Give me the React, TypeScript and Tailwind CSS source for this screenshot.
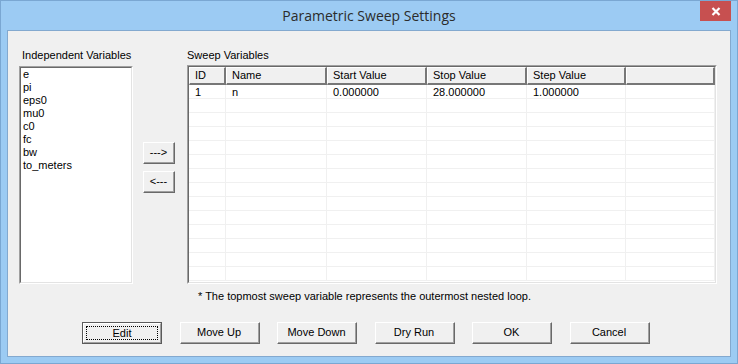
import React from 'react'

const INDEPENDENT = ['e', 'pi', 'eps0', 'mu0', 'c0', 'fc', 'bw', 'to_meters']

const COLUMNS = [
  { label: 'ID', w: 'w-[37px]' },
  { label: 'Name', w: 'w-[101px]' },
  { label: 'Start Value', w: 'w-[100px]' },
  { label: 'Stop Value', w: 'w-[100px]' },
  { label: 'Step Value', w: 'w-[99px]' },
  { label: '', w: 'flex-1' }
]

const ROWS = [['1', 'n', '0.000000', '28.000000', '1.000000', '']]

// classic raised 3D button
function WinButton({ label, w = 'w-[80px]', isDefault = false }: { label: string; w?: string; isDefault?: boolean }) {
  if (isDefault) {
    return (
      <div className={`${w} h-[22px] border border-[#5a5a5a]`}>
        <div className="h-full border-t border-l border-white border-r border-b border-r-[#a0a0a0] border-b-[#a0a0a0] bg-[#f0f0f0] p-[2px]">
          <div className="h-full border border-dotted border-black flex items-center justify-center text-black">
            {label}
          </div>
        </div>
      </div>
    )
  }
  return (
    <div className={`${w} h-[22px] border-t border-l border-t-white border-l-white border-r border-b border-r-[#696969] border-b-[#696969]`}>
      <div className="h-full border-r border-b border-r-[#a0a0a0] border-b-[#a0a0a0] bg-[#f0f0f0] flex items-center justify-center text-black">
        {label}
      </div>
    </div>
  )
}

function Sunken({ className = '', children }: { className?: string; children: React.ReactNode }) {
  return (
    <div className={`border border-t-[#a0a0a0] border-l-[#a0a0a0] border-r-white border-b-white ${className}`}>
      <div className="h-full border border-t-[#696969] border-l-[#696969] border-r-[#e3e3e3] border-b-[#e3e3e3] bg-white overflow-hidden">
        {children}
      </div>
    </div>
  )
}

export default function App() {
  const rows = Array.from({ length: 14 }, (_, i) => ROWS[i] || ['', '', '', '', '', ''])

  return (
    <div
      className="w-[738px] h-[364px] bg-[#9ccbf3] border border-[#7aa7d2] flex flex-col text-[11px] leading-[13px]"
      style={{ fontFamily: '"Liberation Sans", Arial, sans-serif' }}
    >
      {/* title bar */}
      <div className="relative h-[29px] flex items-center justify-center">
        <span
          className="text-[14px] text-[#2b2b2b] pb-[1px]"
          style={{ fontFamily: '"Open Sans", "Noto Sans", sans-serif' }}
        >
          Parametric Sweep Settings
        </span>
        <div className="absolute right-[6px] top-0 w-[31px] h-[20px] bg-[#c75050] flex items-center justify-center">
          <svg width="10" height="9" viewBox="0 0 10 9">
            <path d="M1.5 1 L8.5 8 M8.5 1 L1.5 8" stroke="white" strokeWidth="2.2" />
          </svg>
        </div>
      </div>

      {/* client area */}
      <div className="mx-[6px] mb-[6px] flex-1 border border-[#83a9cf] bg-[#f0f0f0] flex flex-col">
        <div className="flex pt-[18px] pl-[11px]">
          {/* independent variables */}
          <div className="flex flex-col w-[114px]">
            <div className="h-[13px] pl-[3px] mb-[4px]">Independent Variables</div>
            <Sunken className="h-[218px]">
              <div className="pl-[2px] flex flex-col">
                {INDEPENDENT.map(v => (
                  <div key={v} className="h-[13px]">{v}</div>
                ))}
              </div>
            </Sunken>
          </div>

          {/* move buttons */}
          <div className="ml-[10px] mt-[93px] flex flex-col gap-[7px]">
            <WinButton label="--->" w="w-[32px]" />
            <WinButton label="<---" w="w-[32px]" />
          </div>

          {/* sweep variables */}
          <div className="ml-[12px] flex flex-col w-[530px]">
            <div className="h-[13px] mb-[3px]">Sweep Variables</div>
            <Sunken className="h-[219px]">
              <div className="flex h-[18px]">
                {COLUMNS.map((c, i) => (
                  <div
                    key={i}
                    className={`${c.w} shrink-0 border-t border-l border-white border-r-2 border-b-2 border-r-[#777777] border-b-[#777777] bg-[#f0f0f0] pl-[5px] flex items-center`}
                  >
                    {c.label}
                  </div>
                ))}
              </div>
              {rows.map((r, ri) => (
                <div key={ri} className="flex h-[14px]">
                  {r.map((cell, ci) => (
                    <div
                      key={ci}
                      className={`${COLUMNS[ci].w} shrink-0 border-r border-b border-[#f0f0f0] pl-[6px] pt-[1px]`}
                    >
                      {cell}
                    </div>
                  ))}
                </div>
              ))}
            </Sunken>
            <div className="mt-[6px] pl-[11px] h-[13px]">
              * The topmost sweep variable represents the outermost nested loop.
            </div>
          </div>
        </div>

        {/* bottom buttons */}
        <div className="mt-auto mb-[12px] pl-[74px] flex gap-[17.5px]">
          <WinButton label="Edit" isDefault />
          <WinButton label="Move Up" />
          <WinButton label="Move Down" />
          <WinButton label="Dry Run" />
          <WinButton label="OK" />
          <WinButton label="Cancel" />
        </div>
      </div>
    </div>
  )
}
